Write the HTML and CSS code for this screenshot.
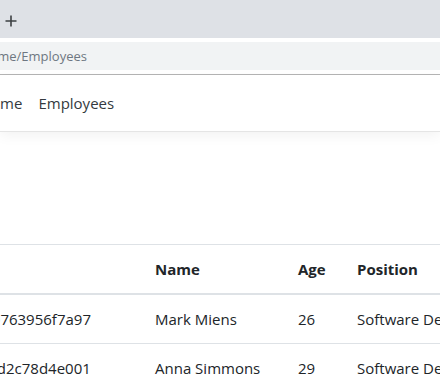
FILE: index.html
```html
<!DOCTYPE html>
<html lang="en">
<head>
    <meta charset="UTF-8">
    <meta name="viewport" content="width=device-width, initial-scale=1.0">
    <title>Employees</title>
    <link rel="stylesheet" href="styles.css">
</head>
<body>
    <div class="tabbar">
        <svg class="newtab" width="12" height="12" viewBox="0 0 12 12">
            <path d="M6 0.5v11M0.5 6h11" stroke="#3c4043" stroke-width="1.6" fill="none"/>
        </svg>
    </div>
    <div class="toolbar">
        <div class="omnibox">
            <div class="url"><span>localhost:5001/Home/Employees</span></div>
        </div>
    </div>

    <nav class="navbar">
        <ul class="nav-links">
            <li><a href="#">Home</a></li>
            <li><a href="#">Employees</a></li>
        </ul>
    </nav>

    <main class="container">
        <table class="table">
            <thead>
                <tr>
                    <th class="col-id">Id</th>
                    <th class="col-name">Name</th>
                    <th class="col-age">Age</th>
                    <th class="col-position">Position</th>
                </tr>
            </thead>
            <tbody>
                <tr>
                    <td>5f2d9c4e1a8b0763956f7a97</td>
                    <td>Mark Miens</td>
                    <td>26</td>
                    <td>Software Developer</td>
                </tr>
                <tr>
                    <td>5f2d9c6a3e7fbd2c78d4e001</td>
                    <td>Anna Simmons</td>
                    <td>29</td>
                    <td>Software Developer</td>
                </tr>
            </tbody>
        </table>
    </main>
</body>
</html>
```

FILE: styles.css
```css
body {
    margin: 0;
    font-family: "Open Sans", "Noto Sans", sans-serif;
    font-size: 15px;
    line-height: 24px;
    color: #212529;
    background-color: #fff;
    overflow: hidden;
}

/* browser chrome */
.tabbar {
    height: 38px;
    background-color: #dee1e6;
    padding: 15px 0 0 5px;
    box-sizing: border-box;
}
.newtab {
    display: block;
}
.toolbar {
    padding: 4px 0;
    border-bottom: 1px solid #b5b5b5;
}
.omnibox {
    height: 28px;
    background-color: #f1f3f4;
    display: flex;
    align-items: center;
}
.url {
    flex: 0 0 87px;
    min-width: 0;
    display: flex;
    justify-content: flex-end;
    white-space: nowrap;
    font-size: 13px;
    color: #6e7781;
}
.url span {
    flex-shrink: 0;
}

/* site navbar */
.navbar {
    padding: 8px 0;
    border-bottom: 1px solid #e5e5e5;
    box-shadow: 0 4px 12px rgba(0, 0, 0, 0.05);
}
.nav-links {
    list-style: none;
    margin: 0 0 0 -28px;
    padding: 0;
    display: flex;
}
.nav-links a {
    display: block;
    padding: 8px;
    color: #343a40;
    text-decoration: none;
}

/* page */
.container {
    margin: 112px 0 0 -119px;
}
.table {
    border-collapse: collapse;
    table-layout: fixed;
    width: 720px;
}
.table th,
.table td {
    padding: 12px;
    text-align: left;
    vertical-align: top;
    border-top: 1px solid #dee2e6;
    white-space: nowrap;
}
.table thead th {
    font-weight: 700;
    border-bottom: 2px solid #dee2e6;
}
.col-id {
    width: 238px;
}
.col-name {
    width: 119px;
}
.col-age {
    width: 35px;
}
.col-position {
    width: 240px;
}
```
